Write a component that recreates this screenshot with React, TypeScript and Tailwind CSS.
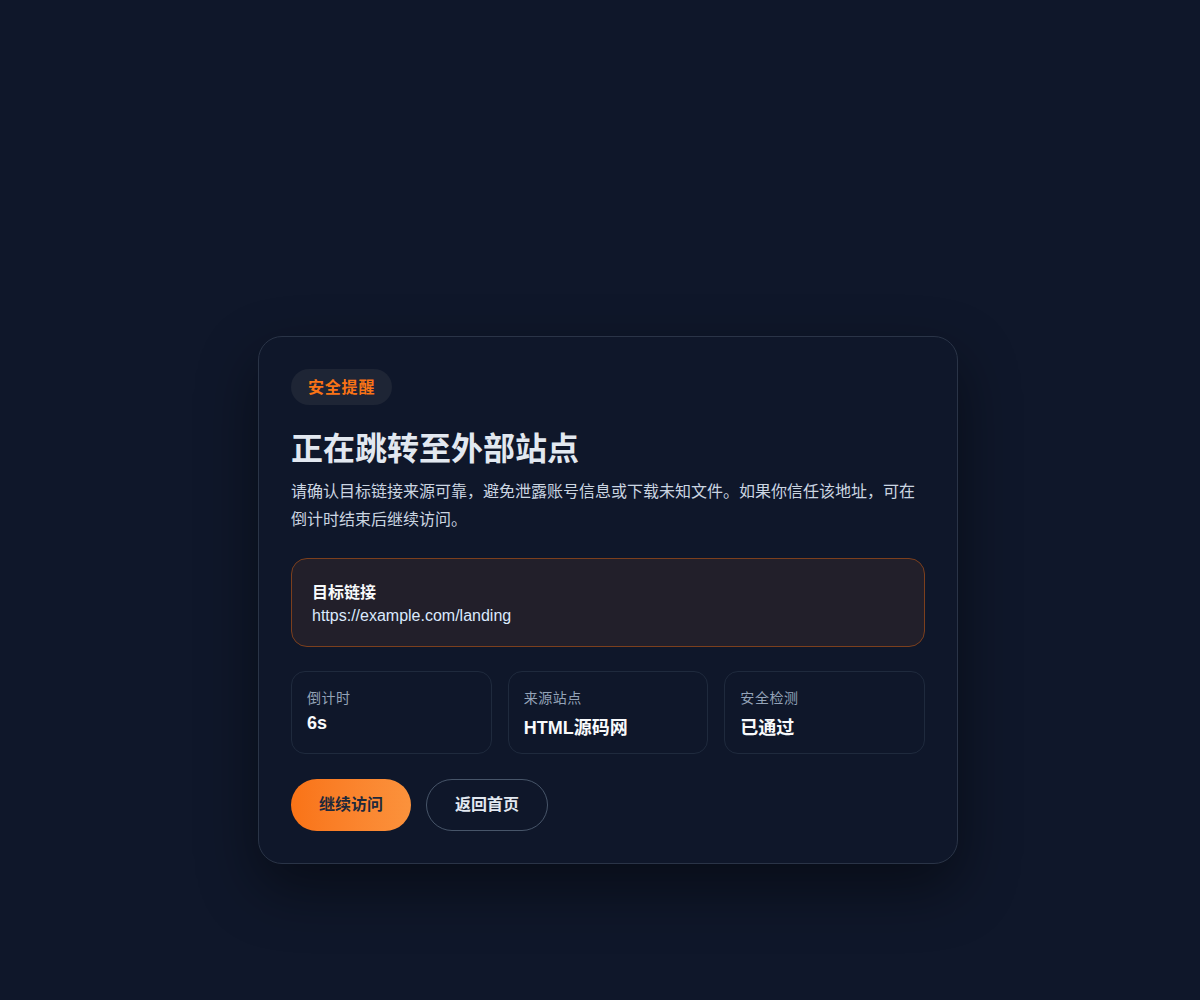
import React from "react";

export default function App() {
  const font = { fontFamily: '"Liberation Sans", "Noto Sans CJK SC", Arial, sans-serif' };
  return (
    <div className="min-h-screen w-full bg-[#0f172a] flex justify-center pl-4 pt-[336px] pb-[136px]" style={font}>
      <div className="w-[700px] rounded-[24px] border border-[#2a3447] bg-[#0f172a] p-8 shadow-[0_24px_60px_rgba(0,0,0,0.45)]">
        <div className="inline-flex h-9 items-center rounded-full bg-[#1e2535] px-[17px] pt-[1px] text-[16px] font-bold tracking-[0.05em] text-[#f97316]">
          安全提醒
        </div>
        <h1 className="mt-6 text-[32px] font-bold leading-[40px] text-[#e2e8f0]">正在跳转至外部站点</h1>
        <p className="mt-[9px] text-[16px] leading-[28px] text-[#cbd5e1]">
          请确认目标链接来源可靠，避免泄露账号信息或下载未知文件。如果你信任该地址，可在倒计时结束后继续访问。
        </p>
        <div className="mt-6 rounded-[16px] border border-[#7c3f1d] bg-[#221f2a] px-5 pt-[22px] pb-[19px]">
          <div className="text-[16px] font-bold leading-[24px] text-[#f8fafc]">目标链接</div>
          <div className="text-[16px] leading-[22px] text-[#dbeafe]">https://example.com/landing</div>
        </div>
        <div className="mt-6 grid grid-cols-3 gap-4">
          <div className="h-[83px] rounded-[14px] border border-[#1f2a3d] px-[15px] pt-[15px]">
            <div className="text-[14px] leading-[22px] tracking-[0.04em] text-[#94a3b8]">倒计时</div>
            <div className="mt-[3px] text-[18px] font-bold leading-[22px] text-[#f8fafc]">6s</div>
          </div>
          <div className="h-[83px] rounded-[14px] border border-[#1f2a3d] px-[15px] pt-[15px]">
            <div className="text-[14px] leading-[22px] tracking-[0.04em] text-[#94a3b8]">来源站点</div>
            <div className="mt-[6px] text-[18px] font-bold leading-[26px] text-[#f8fafc]">HTML源码网</div>
          </div>
          <div className="h-[83px] rounded-[14px] border border-[#1f2a3d] px-[15px] pt-[15px]">
            <div className="text-[14px] leading-[22px] tracking-[0.04em] text-[#94a3b8]">安全检测</div>
            <div className="mt-[6px] text-[18px] font-bold leading-[26px] text-[#f8fafc]">已通过</div>
          </div>
        </div>
        <div className="mt-[25px] flex gap-[15px]">
          <button className="h-[52px] w-[120px] rounded-full bg-gradient-to-r from-[#f97316] to-[#fb923c] text-[16px] font-bold text-[#1e293b]">
            继续访问
          </button>
          <button className="h-[52px] w-[122px] rounded-full border border-[#475569] bg-transparent text-[16px] font-bold text-[#e2e8f0]">
            返回首页
          </button>
        </div>
      </div>
    </div>
  );
}
